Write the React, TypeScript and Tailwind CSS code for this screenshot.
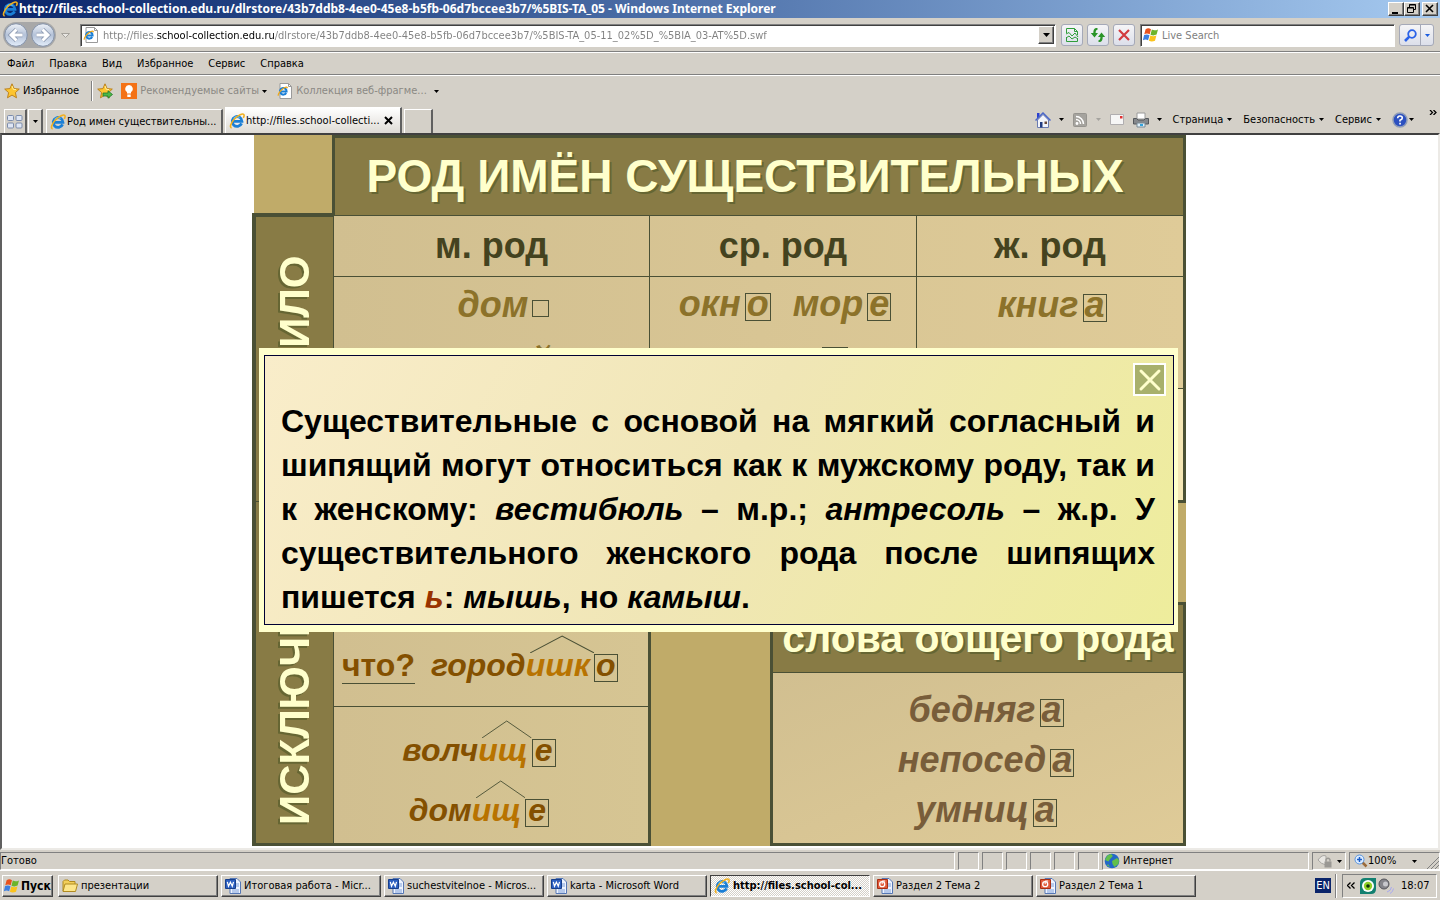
import type { ReactNode } from "react";

const raised =
  "border border-t-white border-l-white border-r-[#404040] border-b-[#404040] shadow-[inset_-1px_-1px_0_#808080]";
const statusCell = "border border-t-[#808080] border-l-[#808080] border-r-white border-b-white";

const IeIcon = ({ className = "w-4 h-4" }: { className?: string }) => (
  <svg viewBox="0 0 16 16" className={`${className} shrink-0`} fill="none">
    <path d="M12.6 10.4A4.9 4.9 0 1 1 13 8.4H4.2" stroke="#1b7fd6" strokeWidth="2.8" />
    <path d="M4.6 5.6A4.6 4.6 0 0 1 10.6 4.4" stroke="#63c1f5" strokeWidth="1.2" />
    <path d="M2.6 15C.4 14.4 1.6 10 5.6 5.8 9.4 2 13.6.2 14.8 1.5c.6.7.3 1.9-.5 3.3" stroke="#f0b020" strokeWidth="1.6" />
  </svg>
);

const IePageIcon = ({ className = "w-4 h-4" }: { className?: string }) => (
  <svg viewBox="0 0 16 16" className={`${className} shrink-0`} fill="none">
    <path d="M3 .5h8.5l3 3v12H3z" fill="#fff" stroke="#9a9a9a" />
    <path d="M11.5.5v3h3" stroke="#9a9a9a" />
    <path d="M9.2 9.9A3.3 3.3 0 1 1 9.6 8.4H3.4" stroke="#1b7fd6" strokeWidth="2" />
    <path d="M1.4 12.8c-1-1.8 2.6-6.2 6-8 1.8-.9 3-.9 3 .4" stroke="#f0a818" strokeWidth="1.2" />
  </svg>
);

const StarIcon = ({ add = false }: { add?: boolean }) => (
  <svg viewBox="0 0 16 16" className="w-4 h-4 shrink-0">
    <path d="M8 .8l2.1 4.8 5.2.5-3.9 3.5 1.1 5.2L8 12.1l-4.5 2.7 1.1-5.2L.7 6.1l5.2-.5z" fill="#fdc530" stroke="#b87a14" strokeWidth=".9" />
    <path d="M8 3l1.3 3.3 2.7.3" stroke="#fff0a0" fill="none" />
    {add && <path d="M6 10h5V7.8l4.5 3.7-4.5 3.7V13H6z" fill="#4cb848" stroke="#20782a" strokeWidth=".8" />}
  </svg>
);

const WindowsFlag = () => (
  <svg viewBox="0 0 16 16" className="w-4 h-4 shrink-0">
    <path d="M2.6 2.2C4.6 1 6.2 1.2 8 2.2L6.7 7.3C5 6.300 3.3 6.2 1.3 7.2z" fill="#e8521e" />
    <path d="M8.8 2.6c2 1 3.9 1 6.2-.2l-1.4 5.200c-2.100 1-4 1.100-6.100.1z" fill="#6db42c" />
    <path d="M1.1 8.100c2-1 3.700-.9 5.400.1l-1.400 5.100C3.400 12.300 1.800 12.300-.1 13.300z" fill="#3d7fe0" />
    <path d="M7.3 8.600c2 1 4 .9 6.100-.1L12 13.700c-2.100 1-4 1.100-6.100.1z" fill="#fbc31c" />
  </svg>
);

const WordIcon = () => (
  <svg viewBox="0 0 16 16" className="w-4 h-4 shrink-0" fill="none">
    <path d="M5 .5h7l3.5 3.5v11.5H5z" fill="#eef4ff" stroke="#5577b5" />
    <path d="M11 6h3M11 8h3M7 12h7M7 14h7" stroke="#7f9fd8" />
    <path d="M.5 1.5h10v9H.5z" fill="#2c5fc0" stroke="#173f8c" />
    <path d="M2.3 3.8l1.2 4.4 1.9-4 1.9 4 1.2-4.4" stroke="#fff" strokeWidth="1.2" />
  </svg>
);

const SlidesIcon = () => (
  <svg viewBox="0 0 16 16" className="w-4 h-4 shrink-0" fill="none">
    <path d="M5 .5h7l3.5 3.5v11.5H5z" fill="#eef4ff" stroke="#5577b5" />
    <path d="M11 6h3M11 8h3M7 12h7M7 14h7" stroke="#7f9fd8" />
    <path d="M.5 1.5h10v9H.5z" fill="#e0593a" stroke="#a82e14" />
    <circle cx="5.2" cy="6.2" r="2.5" stroke="#fff" strokeWidth="1.3" />
    <path d="M5.2 6.2V3h3" stroke="#fff" />
  </svg>
);

const Caret = ({ className = "text-black" }: { className?: string }) => (
  <svg viewBox="0 0 5 3" className={`w-[5px] h-[3px] shrink-0 ${className}`}>
    <path d="M0 0h5L2.5 3z" fill="currentColor" />
  </svg>
);

const Arrow = ({ flip = false }: { flip?: boolean }) => {
  const d = flip ? "M5.5 12h11M11.5 6.5l5.5 5.5-5.5 5.5" : "M18.5 12h-11M12.5 6.5L7 12l5.5 5.5";
  return (
    <svg viewBox="0 0 24 24" className="w-6 h-6" fill="none">
      <defs>
        <linearGradient id="navball" x1="0" y1="0" x2="0" y2="1">
          <stop offset="0" stopColor="#eef2f8" />
          <stop offset=".5" stopColor="#b4c2d8" />
          <stop offset="1" stopColor="#e4eefb" />
        </linearGradient>
      </defs>
      <circle cx="12" cy="12" r="11.3" fill="url(#navball)" stroke="#8391a8" />
      <path d={d} stroke="#8694ad" strokeWidth="4.5" />
      <path d={d} stroke="#fff" strokeWidth="3" />
    </svg>
  );
};

const ToolButton = ({ label, children }: { label: string; children: ReactNode }) => (
  <button
    aria-label={label}
    className="w-[22px] h-[22px] flex items-center justify-center rounded-[3px] border border-[#a5a9b8] bg-gradient-to-b from-[#f5f5f7] to-[#dcdfea]"
  >
    {children}
  </button>
);

const TitleBar = () => (
  <header className="h-[18px] shrink-0 flex items-center px-0.5 bg-gradient-to-r from-[#0a246a] to-[#a6caf0]">
    <IeIcon />
    <h1 className="ml-px flex-1 truncate font-['Noto_Sans',sans-serif] text-xs font-bold text-white">
      http://files.school-collection.edu.ru/dlrstore/43b7ddb8-4ee0-45e8-b5fb-06d7bccee3b7/%5BIS-TA_05 - Windows Internet Explorer
    </h1>
    <div className="flex">
      <button aria-label="Свернуть" className={`w-4 h-3.5 bg-[#d4d0c8] ${raised}`}>
        <svg viewBox="0 0 14 12" className="w-3.5 h-3"><path d="M3 9h6v2H3z" /></svg>
      </button>
      <button aria-label="Восстановить" className={`w-4 h-3.5 bg-[#d4d0c8] ${raised}`}>
        <svg viewBox="0 0 14 12" className="w-3.5 h-3" fill="none" stroke="#000">
          <path d="M4.500 4V1.500h6v5H9M4.500 2h6M2.500 4.500h6v5h-6zM2.500 5h6" />
        </svg>
      </button>
      <button aria-label="Закрыть" className={`ml-0.5 w-4 h-3.5 bg-[#d4d0c8] ${raised}`}>
        <svg viewBox="0 0 14 12" className="w-3.5 h-3"><path d="M3 2l7 7M10 2L3 9" stroke="#000" strokeWidth="1.6" /></svg>
      </button>
    </div>
  </header>
);

const AddressBar = () => (
  <div className="h-[35px] shrink-0 flex items-center pl-[3px] pr-1.5 border-b border-b-white shadow-[inset_0_-1px_0_#808080]">
    <div className="w-[53px] h-[26px] flex items-center justify-between rounded-full bg-[#a8a8a8] px-px">
      <button aria-label="Назад"><Arrow /></button>
      <button aria-label="Вперёд"><Arrow flip /></button>
    </div>
    <svg viewBox="0 0 9 5" className="w-[9px] h-[5px] mx-[5px]"><path d="M.5.5h8L4.5 4.5z" fill="#e8e6e2" stroke="#a5a29c" /></svg>
    <div className="ml-[5px] flex-1 h-[23px] flex items-center bg-white border border-t-[#808080] border-l-[#808080] border-r-white border-b-white shadow-[inset_1px_1px_0_#404040]">
      <IePageIcon className="ml-0.5 w-4 h-4" />
      <input
        aria-label="Адрес"
        defaultValue="http://files.school-collection.edu.ru/dlrstore/43b7ddb8-4ee0-45e8-b5fb-06d7bccee3b7/%5BIS-TA_05-11_02%5D_%5BIA_03-AT%5D.swf"
        className="ml-1 mt-0.5 flex-1 min-w-0 outline-none text-transparent bg-clip-text bg-[linear-gradient(90deg,#808080_0_54px,#000_54px_171px,#808080_171px)]"
      />
      <button aria-label="Список адресов" className={`w-4 h-[18px] mr-px flex items-center justify-center bg-[#d4d0c8] ${raised}`}>
        <svg viewBox="0 0 7 4" className="w-[7px] h-1"><path d="M0 0h7L3.500 4z" /></svg>
      </button>
    </div>
    <div className="ml-[5px] flex gap-1">
      <ToolButton label="Режим совместимости">
        <svg viewBox="0 0 14 16" className="w-3.5 h-4" fill="none" stroke="#2f9e3a">
          <path d="M1.500 6V1.500h8l3 3V8M9.500 1.500v3h3M1.500 10v4.500h11V11" />
          <path d="M1 7l3-1.500L7 9l3-3 3 4M1 11l3-2 3 3 3-2 3 2" />
        </svg>
      </ToolButton>
      <ToolButton label="Обновить">
        <svg viewBox="0 0 16 16" className="w-4 h-4" fill="#2a9428">
          <path d="M7.500 1H6Q3.300 1.500 3.300 6H.8l3.700 4.500L8 6H5.600Q5.500 3 7.500 2.800zM8.500 15H10q2.700-.5 2.700-5h2.500l-3.700-4.500L8 10h2.400q.1 3-1.900 3.200z" />
        </svg>
      </ToolButton>
      <ToolButton label="Остановить">
        <svg viewBox="0 0 14 14" className="w-3.5 h-3.5" stroke="#d23a3e" strokeWidth="2.2">
          <path d="M2 2l10 10M12 2L2 12" />
        </svg>
      </ToolButton>
    </div>
    <div className="ml-[5px] w-[255px] h-[23px] flex items-center bg-white border border-t-[#808080] border-l-[#808080] border-r-white border-b-white shadow-[inset_1px_1px_0_#404040]">
      <span className="ml-0.5"><WindowsFlag /></span>
      <input aria-label="Поиск" placeholder="Live Search" className="ml-[3px] mt-0.5 flex-1 min-w-0 outline-none placeholder:text-[#808080]" />
    </div>
    <div className="ml-1 h-[22px] flex rounded-[3px] border border-[#a5a9b8] bg-gradient-to-b from-[#f5f5f7] to-[#dcdfea]">
      <button aria-label="Найти" className="w-[21px] flex items-center justify-center border-r border-[#a5a9b8]">
        <svg viewBox="0 0 13 13" className="w-[13px] h-[13px]" fill="none" stroke="#2a62e8">
          <circle cx="8" cy="5" r="3.8" strokeWidth="1.8" />
          <path d="M5.3 7.7L1 12" strokeWidth="2.6" />
        </svg>
      </button>
      <button aria-label="Параметры поиска" className="w-3 flex items-center justify-center"><Caret className="text-[#1a5ce0]" /></button>
    </div>
  </div>
);

const menu = ["Файл", "Правка", "Вид", "Избранное", "Сервис", "Справка"];

const MenuBar = () => (
  <nav className="h-[23px] shrink-0 flex items-center gap-[15px] pl-[7px] border-b border-b-white shadow-[inset_0_-1px_0_#808080]">
    {menu.map((item) => <button key={item}>{item}</button>)}
  </nav>
);

const FavoritesBar = () => (
  <div className="h-[30px] shrink-0 flex items-center pl-1">
    <button className="flex items-center gap-[3px] text-black"><StarIcon />Избранное</button>
    <div className="ml-3 mr-[5px] w-px h-5 bg-[#808080] shadow-[1px_0_0_#fff]" />
    <button aria-label="Добавить в избранное"><StarIcon add /></button>
    <button className="ml-2 flex items-center gap-[3px] text-[#8b8984]">
      <svg viewBox="0 0 16 16" className="w-4 h-4">
        <path d="M0 0h16v16H0z" fill="#f47216" />
        <path d="M8 2a3.800 3.800 0 0 0-2 7v1.500h4V9a3.800 3.800 0 0 0-2-7zM6.300 11.500h3.400V14H6.300z" fill="#fff" />
      </svg>
      Рекомендуемые сайты
      <Caret />
    </button>
    <button className="ml-2.5 flex items-center gap-[3px] text-[#8b8984]">
      <IePageIcon />
      Коллекция веб-фрагме...
      <span className="ml-1"><Caret /></span>
    </button>
  </div>
);

const tabEdge = "border-t border-l border-white border-r-2 border-r-[#606060]";

const TabRow = () => (
  <div className="h-[27px] shrink-0 flex items-end pl-1">
    <button aria-label="Быстрые вкладки" className={`w-[23px] h-6 flex items-center justify-center ${tabEdge}`}>
      <svg viewBox="0 0 16 14" className="w-4 h-3.5" fill="#dfe6f4" stroke="#7c8cab">
        <rect x=".5" y=".5" width="6" height="5" rx="1" />
        <rect x="9" y=".5" width="6" height="5" rx="1" />
        <rect x=".5" y="8" width="6" height="5" rx="1" />
        <rect x="9" y="8" width="6" height="5" rx="1" />
      </svg>
    </button>
    <button aria-label="Список вкладок" className={`ml-px w-[15px] h-6 flex items-center justify-center ${tabEdge}`}>
      <Caret />
    </button>
    <button className={`ml-[3px] w-[177px] h-6 flex items-center gap-px pl-[3px] ${tabEdge}`}>
      <IeIcon />
      <span className="truncate">Род имен существительны...</span>
    </button>
    <div className={`ml-0.5 w-[177px] h-[26px] flex items-center gap-px pl-[3px] pr-[7px] bg-gradient-to-b from-white to-[#dedbd5] ${tabEdge}`}>
      <IeIcon />
      <button className="flex-1 truncate text-left">http://files.school-collecti...</button>
      <button aria-label="Закрыть вкладку">
        <svg viewBox="0 0 9 9" className="w-[9px] h-[9px]"><path d="M1 1l7 7M8 1L1 8" stroke="#000" strokeWidth="2" /></svg>
      </button>
    </div>
    <button aria-label="Новая вкладка" className={`ml-0.5 w-[29px] h-6 ${tabEdge}`} />
    <div className="ml-auto mr-[3px] h-[27px] flex items-center">
      <button aria-label="Домой" className="flex items-center gap-2">
        <svg viewBox="0 0 16 16" className="w-4 h-4">
          <path d="M2.500 8L8 2.500 13.500 8v7.500h-11z" fill="#f2f4fb" stroke="#6b7bb0" />
          <path d="M2 1h2.500v4L2 7z" fill="#2a3fd0" />
          <path d="M.5 8.500L8 1l7.500 7.500" fill="none" stroke="#4a66c8" strokeWidth="1.5" />
          <path d="M5 10h2.500v5.500H5z" fill="#223c80" />
          <path d="M9.500 9.500H12V12H9.500z" fill="#6b4a3a" />
        </svg>
        <Caret />
      </button>
      <button aria-label="Веб-каналы" className="ml-2 flex items-center gap-2">
        <svg viewBox="0 0 16 16" className="w-4 h-4" fill="none" stroke="#fff" strokeWidth="1.5">
          <rect x="1.5" y="1.5" width="13" height="13" rx="1" fill="#a5a39e" stroke="#96948f" strokeWidth="1" />
          <path d="M4 7.500a4.500 4.500 0 0 1 4.500 4.500M4 4.500a7.500 7.500 0 0 1 7.500 7.500" />
          <circle cx="5" cy="11.5" r=".7" />
        </svg>
        <Caret className="text-[#a5a39e]" />
      </button>
      <button aria-label="Почта" className="ml-[9px]">
        <svg viewBox="0 0 14 11" className="w-3.5 h-[11px]">
          <path d="M.5.5h13v10H.5z" fill="#f6f6f6" stroke="#b0aeb0" />
          <path d="M10 2h2.500v2.500H10z" fill="#e03030" />
        </svg>
      </button>
      <button aria-label="Печать" className="ml-[9px] flex items-center gap-2">
        <svg viewBox="0 0 16 16" className="w-4 h-4">
          <path d="M4 1h8v6H4z" fill="#fff" stroke="#9a9a9a" />
          <path d="M.5 6.500h3L5 8h6l1.500-1.500h3V12H.5z" fill="#85888c" stroke="#55585c" />
          <path d="M4 11h8v4H4z" fill="#dff0fa" stroke="#7a8a95" />
          <path d="M7 12h3v2H7z" fill="#33a3dc" />
        </svg>
        <Caret />
      </button>
      <button className="ml-[11px] flex items-center gap-1">Страница<Caret /></button>
      <button className="ml-[11px] flex items-center gap-1">Безопасность<Caret /></button>
      <button className="ml-[11px] flex items-center gap-1">Сервис<Caret /></button>
      <button aria-label="Справка" className="ml-[11px] flex items-center gap-px">
        <svg viewBox="0 0 16 16" className="w-4 h-4" fill="none">
          <circle cx="8" cy="8" r="7" fill="#2c50c0" stroke="#8e9cb8" strokeWidth="1.5" />
          <path d="M5.700 6.200q0-2.200 2.300-2.200t2.300 1.900Q10.300 7.200 8 8.200V9.500" stroke="#fff" strokeWidth="1.6" />
          <path d="M7.200 10.700h1.700v1.700H7.200z" fill="#fff" />
        </svg>
        <Caret />
      </button>
      <button aria-label="Ещё" className="ml-[15px] self-start">
        <svg viewBox="0 0 8 5" className="w-2 h-[5px] mt-1" fill="none" stroke="#000" strokeWidth="1.3"><path d="M1 0l2.500 2.500L1 5M4.500 0L7 2.500 4.500 5" /></svg>
      </button>
    </div>
  </div>
);

const Ending = ({ children }: { children: ReactNode }) => (
  <span className="inline-block min-w-6 h-7 px-px leading-5 text-center border border-[#4a5035]">{children}</span>
);

// a word split into stem, marked suffix and boxed ending
const Word = ({ stem, suffix, ending }: { stem: string; suffix?: string; ending: string }) => (
  <span className="inline-flex items-baseline gap-1">
    <span>
      {stem}
      {suffix && (
        <span className="relative text-[#b87300]">
          {suffix}
          <svg viewBox="0 0 60 18" preserveAspectRatio="none" className="absolute left-1 -top-3 w-full h-[18px]">
            <path d="M0 18L30 1 60 18" fill="none" stroke="#4a5035" />
          </svg>
        </span>
      )}
    </span>
    <Ending>{ending}</Ending>
  </span>
);

const Dialog = () => (
  <div
    role="dialog"
    aria-label="Правило"
    className="absolute left-[7px] right-2 top-[213px] pt-[7px] pb-[7px] pl-[5px] pr-1 bg-[#ffffcc]"
  >
    <div className="relative border border-[#000033] bg-[linear-gradient(120deg,#f9edca,#f0e6b6_50%,#eeed9c)] pl-4 pr-[18px] pt-[43px] pb-[5px]">
      <button aria-label="Закрыть" className="absolute right-[7px] top-[7px] w-[33px] h-[33px] flex items-center justify-center border-2 border-white bg-[#a8b06c]">
        <svg viewBox="0 0 24 24" className="w-6 h-6"><path d="M3 3l18 18M21 3L3 21" stroke="#ffffcc" strokeWidth="3" strokeLinecap="round" /></svg>
      </button>
      <p className="text-[32px] leading-[44px] font-bold text-black text-justify">
        Существительные с основой на мягкий согласный и шипящий могут относиться как к мужскому роду, так и к женскому:{" "}
        <em>вестибюль</em> – м.р.; <em>антресоль</em> – ж.р. У существительного женского рода после шипящих пишется{" "}
        <em className="text-[#993300]">ь</em>: <em>мышь</em>, но <em>камыш</em>.
      </p>
    </div>
  </div>
);

const sideLabel =
  "h-full flex items-center justify-center text-[42px] leading-[77px] text-[#ffffcc] [writing-mode:vertical-rl] rotate-180 [text-shadow:-2px_-2px_0_#666633]";

const Slide = () => (
  <div className="relative flex w-[934px] shrink-0 font-['Liberation_Sans',Arial,sans-serif] font-bold">
    <div className="w-[82px] flex flex-col">
      <div className="ml-0.5 h-[78px] bg-[#c0ab69] border-r-2 border-[#4a5035]" />
      <div className="bg-[#887b45] border-4 border-r border-b-[3px] border-[#4a5035]">
        <h3 className="h-[285px] border-b border-[#4a5035]"><span className={sideLabel}>ПРАВИЛО</span></h3>
        <h3 className="h-[341px]"><span className={sideLabel}>ИСКЛЮЧЕНИЕ</span></h3>
      </div>
    </div>
    <div className="flex-1 flex flex-col">
      <h2 className="pr-7 bg-[#887b45] border-[#4a5035] border-t-[3px] border-r-[3px] border-b border-l text-[46px] leading-[77px] text-center text-[#ffffcc] [text-shadow:2px_2px_0_#666633]">
        РОД ИМЁН СУЩЕСТВИТЕЛЬНЫХ
      </h2>
      <table className="w-full table-fixed border-separate border-spacing-0 border-[#4a5035] border-r-[3px] border-b-[3px] bg-gradient-to-r from-[#d1bf90] to-[#dfcb98] text-4xl">
        <colgroup>
          <col className="w-[316px]" />
          <col className="w-[267px]" />
          <col />
        </colgroup>
        <thead className="text-[#44431f]">
          <tr>
            <th className="p-0 leading-[60px] border-b border-r border-[#4a5035]">м. род</th>
            <th className="p-0 leading-[60px] border-b border-r border-[#4a5035]">ср. род</th>
            <th className="p-0 leading-[60px] border-b border-[#4a5035]">ж. род</th>
          </tr>
        </thead>
        <tbody className="italic text-center align-top text-[#8c722a]">
          <tr className="h-28">
            <td rowSpan={2} className="p-0 leading-14 border-r border-[#4a5035]">
              <p className="flex items-baseline justify-center gap-1 pl-6">
                дом
                <span className="inline-block w-[17px] h-[17px] border border-[#4a5035]" />
              </p>
              <p className="pl-4">герой</p>
            </td>
            <td rowSpan={2} className="p-0 leading-[54px] border-r border-[#4a5035]">
              <p className="flex items-baseline justify-center gap-[22px] pl-1">
                <Word stem="окн" ending="о" />
                <Word stem="мор" ending="е" />
              </p>
              <p><Word stem="мест" ending="о" /></p>
            </td>
            <td className="p-0 pl-1 leading-14 border-b border-[#4a5035]">
              <Word stem="книг" ending="а" />
            </td>
          </tr>
          <tr className="h-[111px]">
            <td className="p-0 bg-[#f5e6b5]" />
          </tr>
        </tbody>
      </table>
      <div className="flex flex-1 justify-between">
        <section className="w-[317px] flex flex-col text-[32px] text-[#845000] bg-gradient-to-r from-[#d1bf90] to-[#d6c593] border-[#4a5035] border-r-[3px] border-b-[3px]">
          <div className="h-[204px] flex items-end pl-2 pb-[22px] border-b border-[#4a5035]">
            <p className="flex items-baseline gap-4 leading-9">
              <span className="border-b border-[#4a5035]">что?</span>
              <em><Word stem="город" suffix="ишк" ending="о" /></em>
            </p>
          </div>
          <div className="h-[136px] pt-[13px] pr-6 text-center italic leading-[60px]">
            <p><Word stem="волч" suffix="ищ" ending="е" /></p>
            <p><Word stem="дом" suffix="ищ" ending="е" /></p>
          </div>
        </section>
        <div className="flex-1 flex justify-end bg-[#c0ab69]">
          <section className="mt-[99px] w-[416px] border-[3px] border-[#4a5035]">
            <h3 className="bg-[#887b45] border-b border-[#4a5035] text-[41px] leading-[67px] text-center whitespace-nowrap text-[#ffffcc] [text-shadow:2px_2px_0_#666633]">
              слова общего рода
            </h3>
            <div className="h-[170px] pt-3 pl-4 text-4xl leading-[50px] italic text-center text-[#785d3a] bg-gradient-to-br from-[#d1bf90] to-[#dfcb98]">
              <p><Word stem="бедняг" ending="а" /></p>
              <p><Word stem="непосед" ending="а" /></p>
              <p><Word stem="умниц" ending="а" /></p>
            </div>
          </section>
        </div>
      </div>
    </div>
    <Dialog />
  </div>
);

const StatusBar = () => (
  <footer className="h-[20px] shrink-0 flex gap-[3px] pt-0.5">
    <div className={`flex-1 flex items-center ${statusCell}`}>Готово</div>
    <div className="flex gap-[3px]">
      {[0, 1, 2, 3, 4, 5].map((i) => <div key={i} className={`w-[21px] ${statusCell}`} />)}
    </div>
    <div className={`w-[207px] flex items-center gap-[3px] pl-px ${statusCell}`}>
      <svg viewBox="0 0 16 16" className="w-4 h-4">
        <circle cx="8" cy="8" r="7.3" fill="#2468c8" />
        <path d="M3 3c3-2.500 6-2 5.500.5L6 6 4.500 8.500 1 7zM8 8l5-3 2 2-.5 4-4 3-2-3zM4 11l2 3-3-1.500z" fill="#62c04a" />
      </svg>
      Интернет
    </div>
    <button aria-label="Защищённый режим" className={`w-[34px] flex items-center gap-1 pl-1 ${statusCell}`}>
      <svg viewBox="0 0 16 16" className="w-4 h-4">
        <path d="M1 7q4-6 8-4v9q-5-1-8-5z" fill="#e8e6e2" stroke="#a8a6a2" />
        <path d="M7.500 8.500h7v6h-7z" fill="#9a9894" />
        <path d="M9 8.500V6.500q2-2.500 4 0v2" fill="none" stroke="#9a9894" strokeWidth="1.3" />
      </svg>
      <Caret />
    </button>
    <button className={`w-[91px] flex items-center pl-1 ${statusCell}`}>
      <svg viewBox="0 0 14 14" className="w-3.5 h-3.5" fill="none">
        <path d="M8 8l4.500 4.500" stroke="#9a6a3a" strokeWidth="2.5" />
        <circle cx="5.5" cy="5.5" r="4.5" fill="#dcecff" stroke="#5a94dc" />
        <path d="M5.500 3v5M3 5.500h5" stroke="#1a5cc8" strokeWidth="1.5" />
      </svg>
      100%
      <span className="ml-4"><Caret /></span>
      <svg viewBox="0 0 12 12" className="ml-auto w-3 h-3 self-end" stroke="#808080"><path d="M0 12L12 0M4 12l8-8M8 12l4-4" /></svg>
    </button>
  </footer>
);

const FolderIcon = () => (
  <svg viewBox="0 0 16 16" className="w-4 h-4 shrink-0">
    <path d="M1 13V3.500L2.500 2H6l1.500 1.500H13V6" fill="#f3cf5a" stroke="#b08a20" />
    <path d="M1 13.500L3 6h12.500l-2 7.500z" fill="#fde68a" stroke="#b08a20" />
  </svg>
);

const tasks = [
  { title: "презентации", icon: <FolderIcon /> },
  { title: "Итоговая работа - Micr...", icon: <WordIcon /> },
  { title: "suchestvitelnoe - Micros...", icon: <WordIcon /> },
  { title: "karta - Microsoft Word", icon: <WordIcon /> },
  { title: "http://files.school-col...", icon: <IeIcon />, active: true },
  { title: "Раздел 2 Тема 2", icon: <SlidesIcon /> },
  { title: "Раздел 2 Тема 1", icon: <SlidesIcon /> },
];

const Taskbar = () => (
  <div className="h-[30px] shrink-0 flex items-center pl-0.5 pr-[3px] border-t border-white">
    <button className={`w-[51px] h-[22px] flex items-center gap-px pl-px text-xs font-bold ${raised}`}>
      <WindowsFlag />
      Пуск
    </button>
    <div className="ml-[5px] flex-1 min-w-0 flex gap-[3px]">
      {tasks.map((t) => (
        <button
          key={t.title}
          className={`w-40 h-[22px] flex items-center gap-[3px] pl-[3px] ${
            t.active
              ? "font-bold border border-t-[#404040] border-l-[#404040] border-r-white border-b-white bg-[repeating-conic-gradient(#fff_0_25%,#d4d0c8_0_50%)] bg-[length:2px_2px]"
              : raised
          }`}
        >
          {t.icon}
          <span className="truncate">{t.title}</span>
        </button>
      ))}
    </div>
    <button className="w-4 h-[15px] bg-[#0a246a] text-white text-center">EN</button>
    <div className="ml-1 mr-1.5 w-px h-6 bg-[#808080] shadow-[1px_0_0_#fff]" />
    <div className={`w-[95px] h-6 flex items-center pl-1 ${statusCell}`}>
      <button aria-label="Показать значки">
        <svg viewBox="0 0 8 7" className="w-2 h-[7px]" fill="none" stroke="#000" strokeWidth="1.3"><path d="M3.500 .5l-3 3 3 3M7.500 .5l-3 3 3 3" /></svg>
      </button>
      <svg viewBox="0 0 16 16" className="ml-[5px] w-4 h-4">
        <path d="M0 5q0-5 5-5h11v11q0 5-5 5H0z" fill="#128070" />
        <circle cx="8" cy="8" r="6" fill="#fff" />
        <circle cx="8" cy="8" r="4.2" fill="#8fd028" />
        <circle cx="8" cy="8" r="1.8" fill="#103008" />
      </svg>
      <svg viewBox="0 0 16 16" className="ml-0.5 w-4 h-4" fill="none">
        <circle cx="6" cy="6" r="5" fill="#85858a" stroke="#55555a" />
        <circle cx="7.5" cy="6" r="2.5" fill="#c8c8cc" />
        <path d="M9 14q4-1 4.500-5M12 15.500q3-1.500 3.500-5" stroke="#a8a8f0" />
      </svg>
      <time className="ml-[7px]">18:07</time>
    </div>
  </div>
);

export default function App() {
  return (
    <div className="h-screen flex flex-col overflow-hidden bg-[#d4d0c8] text-black text-[11px] leading-[14px] whitespace-nowrap font-['DejaVu_Sans_Condensed',Tahoma,sans-serif]">
      <TitleBar />
      <AddressBar />
      <MenuBar />
      <FavoritesBar />
      <TabRow />
      <main className="flex-1 min-h-0 flex justify-center items-start pr-0.5 overflow-hidden whitespace-normal bg-white border-2 border-t-[#404040] border-l-[#606060] border-r-[#eceae6] border-b-[#eceae6]">
        <Slide />
      </main>
      <StatusBar />
      <Taskbar />
    </div>
  );
}
